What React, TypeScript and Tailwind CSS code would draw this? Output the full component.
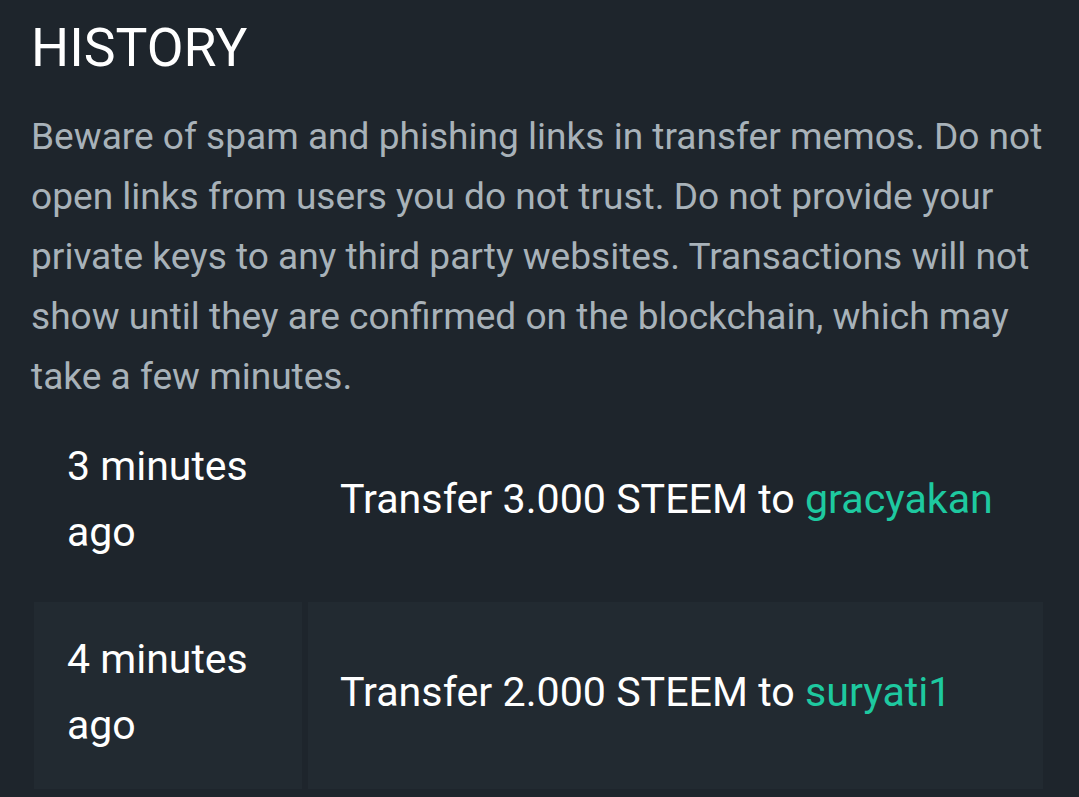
import React from "react";

const rows = [
  { time: "3 minutes ago", amount: "3.000 STEEM", to: "gracyakan", shaded: false },
  { time: "4 minutes ago", amount: "2.000 STEEM", to: "suryati1", shaded: true },
];

export default function App() {
  return (
    <div
      className="w-[1079px] h-[797px] overflow-hidden bg-[#1e252c]"
      style={{ fontFamily: "Roboto, 'Noto Sans', sans-serif" }}
    >
      <div className="pl-[31px] pt-[18px]">
        <h1 className="text-[53.5px] leading-[60px] text-white font-normal">HISTORY</h1>
        <p className="mt-[29px] w-[1030px] text-[37.1px] leading-[60px] text-[#a8b2b9]">
          Beware of spam and phishing links in transfer memos. Do not open links from users you do not trust. Do not provide your private keys to any third party websites. Transactions will not show until they are confirmed on the blockchain, which may take a few minutes.
        </p>
      </div>
      <div className="mt-[2px] pl-[34px] flex flex-col gap-[6px]">
        {rows.map((r) => (
          <div key={r.time} className="flex gap-[6px] h-[187px]">
            <div
              className={`w-[268px] px-[33px] pb-[8px] flex items-center text-[41px] leading-[66px] text-white ${
                r.shaded ? "bg-[#222a31]" : ""
              }`}
            >
              {r.time}
            </div>
            <div
              className={`w-[735px] px-[32px] pb-[8px] flex items-center text-[41.2px] leading-[66px] text-white ${
                r.shaded ? "bg-[#222a31]" : ""
              }`}
            >
              <span>
                Transfer {r.amount} to <span className="text-[#1ec9a0]">{r.to}</span>
              </span>
            </div>
          </div>
        ))}
      </div>
    </div>
  );
}
